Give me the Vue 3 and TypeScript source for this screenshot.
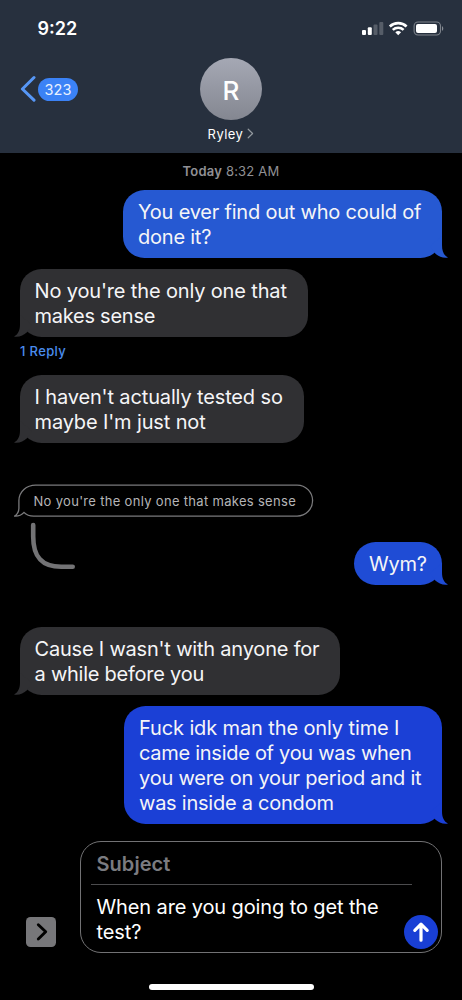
<script setup lang="ts">
interface Line { text: string; spacing: number }
interface Message {
  id: number
  side: 'sent' | 'received'
  tone: string
  width: number
  gap: number
  lines: Line[]
  replies?: string
  quote?: string
}

const messages: Message[] = [
  { id: 1, side: 'sent', tone: 'tone-a', width: 319, gap: 9, lines: [
    { text: 'You ever find out who could of', spacing: -0.21 },
    { text: 'done it?', spacing: -0.22 },
  ] },
  { id: 2, side: 'received', tone: 'grey', width: 288, gap: 11, replies: '1 Reply', lines: [
    { text: "No you're the only one that", spacing: -0.15 },
    { text: 'makes sense', spacing: -0.25 },
  ] },
  { id: 3, side: 'received', tone: 'grey', width: 284, gap: 15, lines: [
    { text: "I haven't actually tested so", spacing: -0.14 },
    { text: "maybe I'm just not", spacing: -0.14 },
  ] },
  { id: 4, side: 'sent', tone: 'tone-b', width: 88, gap: 42, quote: "No you're the only one that makes sense", lines: [
    { text: 'Wym?', spacing: -0.2 },
  ] },
  { id: 5, side: 'received', tone: 'grey', width: 320, gap: 42, lines: [
    { text: "Cause I wasn't with anyone for", spacing: -0.2 },
    { text: 'a while before you', spacing: -0.24 },
  ] },
  { id: 6, side: 'sent', tone: 'tone-c', width: 318, gap: 11, lines: [
    { text: 'Fuck idk man the only time I', spacing: -0.12 },
    { text: 'came inside of you was when', spacing: -0.28 },
    { text: 'you were on your period and it', spacing: -0.2 },
    { text: 'was inside a condom', spacing: -0.24 },
  ] },
]
</script>

<template>
  <div class="phone">
    <header class="header">
      <div class="status">
        <span class="clock">9:22</span>
        <svg class="status-icons" width="84" height="16" viewBox="0 0 84 16">
          <g fill="#fff">
            <rect x="1" y="9" width="4" height="5" rx="1" />
            <rect x="6.8" y="6.3" width="4" height="7.7" rx="1" />
            <rect x="12.5" y="3.6" width="4" height="10.4" rx="1" opacity=".22" />
            <rect x="18.3" y="1" width="4" height="13" rx="1" opacity=".22" />
          </g>
          <g fill="none" stroke="#fff" stroke-width="2.6">
            <path d="M28.8 5.5a12.2 12.2 0 0 1 16.8 0" />
            <path d="M31.8 8.9a8 8 0 0 1 10.8 0" />
          </g>
          <path fill="#fff" d="M34.3 11.2a4.5 4.5 0 0 1 5.8 0l-2.9 3z" />
          <rect x="53.1" y="1" width="26.4" height="13" rx="4" fill="none" stroke="#fff" stroke-opacity=".4" stroke-width="1.1" />
          <rect x="55" y="2.9" width="21" height="9.2" rx="2" fill="#fff" />
          <path d="M81 5.2v4.6c1.7-.7 1.7-3.9 0-4.6z" fill="#fff" opacity=".45" />
        </svg>
      </div>
      <div class="nav">
        <div class="back">
          <svg width="17" height="28" viewBox="0 0 17 28">
            <path d="M15 2.5 3.4 14 15 25.200" fill="none" stroke="#5797f6" stroke-width="3" stroke-linecap="round" stroke-linejoin="round" />
          </svg>
          <span class="count">323</span>
        </div>
        <div class="contact">
          <div class="avatar">R</div>
          <div class="name">
            <span>Ryley</span>
            <svg width="7" height="11" viewBox="0 0 7 11">
              <path d="M1.2 1.2 5.6 5.5 1.2 9.8" fill="none" stroke="#93999f" stroke-width="1.2" stroke-linecap="round" stroke-linejoin="round" />
            </svg>
          </div>
        </div>
      </div>
    </header>

    <main class="thread">
      <div class="date"><b>Today</b> 8:32 AM</div>
      <template v-for="m in messages" :key="m.id">
        <div v-if="m.quote" class="quoted">
          <svg width="302" height="94" viewBox="0 0 302 94" fill="none">
            <path d="M22 1.5H283.5a15.5 15.5 0 0 1 0 31H20c-4 0-7-1-9.6-3.7-2.4 2.6-5.4 4-9.4 3.7 3.2-1.800 4.300-4.200 4.300-8V17C5.300 8 13 1.500 22 1.500z" transform="translate(-.4 -.4)" stroke="#7a7a7c" stroke-width="1.300" />
            <path d="M19.200 41V52.500c0 20 8 30.300 28 30.300h11.500" stroke="#737375" stroke-width="4.600" stroke-linecap="round" />
          </svg>
          <span class="quote-text">{{ m.quote }}</span>
        </div>
        <div class="row" :class="[m.side, m.tone]" :style="{ marginTop: m.quote ? undefined : m.gap + 'px' }">
          <div class="bubble" :style="{ width: m.width + 'px' }">
            <span v-for="line in m.lines" :key="line.text" class="line" :style="{ letterSpacing: line.spacing + 'px' }">{{ line.text }}</span>
            <svg class="tail" width="20" height="22" viewBox="0 0 20 22">
              <path d="M14 0v9c0 6 1.500 10 6 12.600-5 .8-9.500-1-13-4.300L2 10z" fill="currentColor" />
            </svg>
          </div>
        </div>
        <div v-if="m.replies" class="replies">{{ m.replies }}</div>
      </template>
    </main>

    <footer class="composer">
      <div class="apps">
        <svg width="30" height="30" viewBox="0 0 30 30">
          <path d="M12.300 7.700 19.700 14.800 12.300 22" fill="none" stroke="#000" stroke-width="2.900" stroke-linecap="round" stroke-linejoin="round" />
        </svg>
      </div>
      <div class="field">
        <div class="subject">Subject</div>
        <div class="draft"><span class="line">When are you going to get the</span><span class="line">test?</span></div>
        <div class="send">
          <svg width="34" height="34" viewBox="0 0 34 34">
            <path d="M17 25.200V9.700M10.800 15.400 17 9.200l6.200 6.200" fill="none" stroke="#fff" stroke-width="3.200" stroke-linecap="round" stroke-linejoin="round" />
          </svg>
        </div>
      </div>
    </footer>
    <div class="home"></div>
  </div>
</template>

<style>
body { background: #000; }
</style>

<style scoped>
.phone {
  box-sizing: border-box;
  width: 462px;
  height: 1000px;
  overflow: hidden;
  background: #000;
  color: #fff;
  font-family: Inter, "Liberation Sans", sans-serif;
  display: flex;
  flex-direction: column;
}
svg { display: block; flex: none; }
.header { height: 153px; flex: none; background: #27303e; }
.status { height: 57px; display: flex; justify-content: space-between; padding: 0 17px 0 37.500px; }
.clock { font-size: 18px; font-weight: 600; line-height: 22px; margin-top: 18px; }
.status-icons { margin-top: 21px; }
.nav { display: grid; grid-template-columns: 1fr 120px 1fr; padding-top: .5px; }
.back { display: flex; align-items: center; height: 63px; padding-left: 19px; gap: 2px; }
.count {
  width: 40px; height: 23px; border-radius: 12px; background: #3b82f6; color: #e9f1ff;
  font-size: 14.500px; line-height: 23px; text-align: center;
}
.contact { display: flex; flex-direction: column; align-items: center; }
.avatar {
  width: 62px; height: 62px; border-radius: 50%;
  background: linear-gradient(#a5a8b4, #848791);
  font-size: 26px; font-weight: 500; line-height: 65px; text-align: center;
}
.name { display: flex; align-items: center; gap: 4px; margin-top: 5px; font-size: 13px; line-height: 18px; letter-spacing: .45px; }
.thread { height: 671px; flex: none; }
.date { margin-top: 9px; height: 19px; line-height: 18px; font-size: 13px; text-align: center; color: #909095; letter-spacing: .2px; }
.date b { font-weight: 600; }
.row { display: flex; padding: 0 20px; }
.row.sent { justify-content: flex-end; }
.bubble {
  position: relative; box-sizing: border-box; border-radius: 21.500px;
  padding: 9.500px 0 8.500px 15px; background: currentColor;
}
.line { display: block; height: 25px; line-height: 25px; font-size: 20px; white-space: nowrap; letter-spacing: -.12px; }
.bubble .line { color: #f5f5f7; }
.grey { color: #303033; }
.tone-a { color: #2659d2; }
.tone-b { color: #1f4cd5; }
.tone-c { color: #1b40d6; }
.received .bubble { padding-left: 14.500px; }
.tail { position: absolute; right: -6px; bottom: 0; }
.received .tail { right: auto; left: -6px; transform: scaleX(-1); }
.replies { margin: 6px 0 0 20px; height: 17px; line-height: 17px; font-size: 13px; font-weight: 500; color: #4a8ced; letter-spacing: .35px; }
.quoted { display: grid; margin: 41px 0 0 14px; height: 58px; }
.quoted > * { grid-area: 1 / 1; }
.quote-text { font-size: 13px; line-height: 34px; height: 34px; padding-left: 19.500px; color: #b5b5b7; letter-spacing: .31px; white-space: nowrap; }
.composer { display: flex; align-items: flex-end; margin-top: 17px; padding: 0 20px 0 26px; height: 112px; flex: none; }
.apps { width: 30px; height: 30px; border-radius: 4.500px; background: #77777a; margin-bottom: 6px; }
.field { position: relative; box-sizing: border-box; width: 362px; height: 112px; margin-left: 24px; border: 1.300px solid #727274; border-radius: 21px; padding: 10px 0 0 15.500px; }
.subject { height: 33px; margin: 0 29px 0 -5.500px; padding-left: 5.500px; box-sizing: border-box; border-bottom: 1px solid #4c4c4e; line-height: 25px; font-size: 20px; font-weight: 600; color: #7b7b80; letter-spacing: .05px; }
.draft { padding-top: 10px; }
.send { position: absolute; right: 3.500px; bottom: 3px; width: 34px; height: 34px; border-radius: 50%; background: #193fd5; }
.home { width: 165px; height: 6px; border-radius: 3px; background: #fff; margin: 31px auto 0; flex: none; }
</style>
